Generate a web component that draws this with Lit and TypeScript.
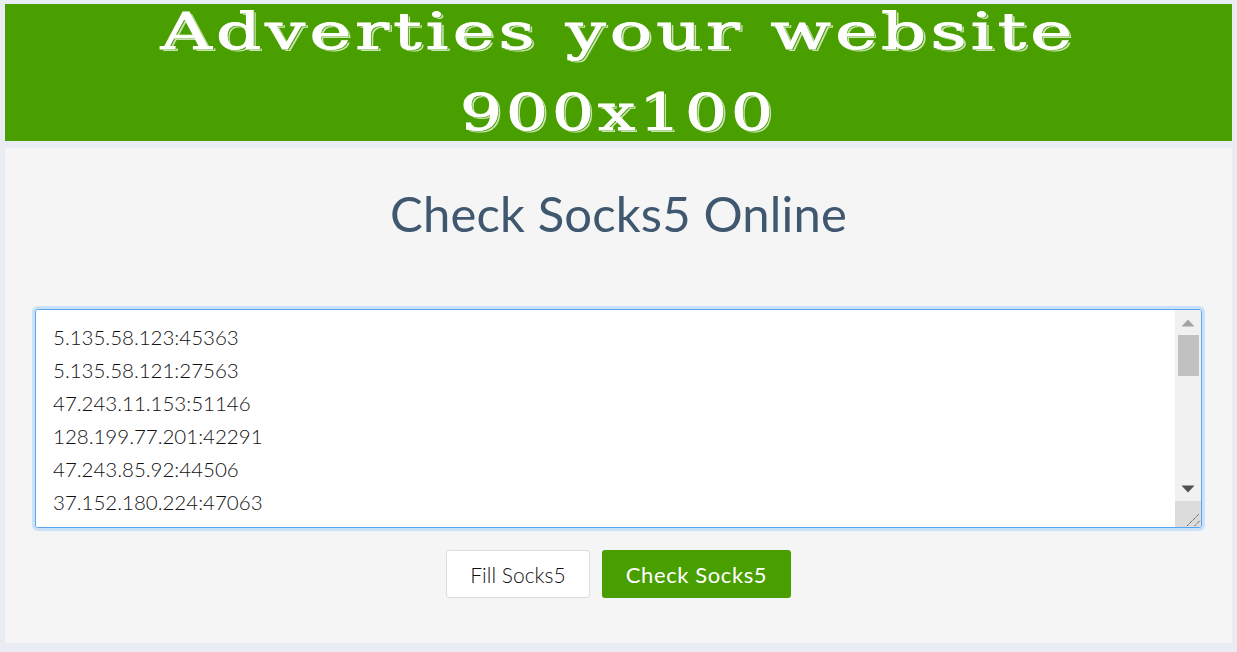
import { LitElement, html, css } from "lit";
import { customElement } from "lit/decorators.js";

const PROXIES = [
  "5.135.58.123:45363",
  "5.135.58.121:27563",
  "47.243.11.153:51146",
  "128.199.77.201:42291",
  "47.243.85.92:44506",
  "37.152.180.224:47063",
].join("\n");

@customElement("app-root")
export class AppRoot extends LitElement {
  static styles = css`
    :host {
      display: block;
      height: 652px;
      overflow: hidden;
      background: #e9edf3;
      font-family: "Lato", "Liberation Sans", sans-serif;
      font-weight: 300;
      color: #111;
    }
    .page {
      display: flex;
      flex-direction: column;
      gap: 7px;
      padding: 4px 5px 9px;
      height: 652px;
      box-sizing: border-box;
    }
    .banner {
      height: 137px;
      flex: none;
      display: flex;
      flex-direction: column;
      gap: 25px;
      background: #4a9f00;
      text-align: center;
      color: #fff;
      font-family: "DejaVu Serif", "Liberation Serif", serif;
      font-weight: 400;
    }
    .banner-line {
      height: 56px;
      line-height: 56px;
      font-size: 50px;
      letter-spacing: 3px;
      white-space: nowrap;
      -webkit-text-stroke: 1px #fff;
      text-shadow: 1px 1px 0 #4a9f00, 2px 2px 0 #c9e4b4;
    }
    .first {
      transform: scaleX(1.41);
    }
    .second {
      transform: scaleX(1.32);
    }
    .panel {
      flex: 1;
      background: #f5f5f5;
      display: flex;
      flex-direction: column;
      align-items: stretch;
      padding: 0 30px;
    }
    h1 {
      margin: 38px 0 69px;
      height: 54px;
      line-height: 54px;
      text-align: center;
      font-size: 49px;
      letter-spacing: 0.15px;
      font-weight: 400;
      color: #3f5870;
    }
    .box {
      display: flex;
      height: 217px;
      margin: 0 0 22px;
      border: 1px solid #5aa6ee;
      border-radius: 3px;
      background: #fff;
      box-shadow: 0 0 0 3px #c9e2f8;
      overflow: hidden;
    }
    textarea {
      flex: 1;
      border: 0;
      outline: 0;
      resize: none;
      overflow: hidden;
      margin: 0;
      padding: 11px 17px 9px;
      background: #fff;
      color: #111;
      font: inherit;
      font-size: 20.5px;
      line-height: 33px;
    }
    .scrollbar {
      flex: none;
      width: 26px;
      display: flex;
      flex-direction: column;
      align-items: center;
      background: #f1f1f1;
    }
    .arrow {
      flex: none;
      height: 25px;
      width: 26px;
      display: flex;
      align-items: center;
      justify-content: center;
    }
    .thumb {
      flex: none;
      width: 21px;
      height: 41px;
      background: #c1c1c1;
    }
    .track {
      flex: 1;
    }
    .corner {
      flex: none;
      width: 26px;
      height: 26px;
      background: #dcdcdc;
      display: block;
    }
    .actions {
      display: flex;
      justify-content: center;
      gap: 12px;
    }
    button {
      height: 48px;
      margin: 0;
      border-radius: 3px;
      font: inherit;
      font-size: 21px;
      box-sizing: border-box;
      padding: 0;
    }
    .fill {
      width: 144px;
      background: #fff;
      color: #111;
      border: 1px solid #dddddd;
    }
    .check {
      width: 189px;
      background: #4a9f00;
      color: #fff;
      border: 0;
      font-weight: 400;
      font-size: 22px;
      letter-spacing: 0.6px;
    }
  `;

  render() {
    return html`
      <div class="page">
        <div class="banner">
          <div class="banner-line first">Adverties your website</div>
          <div class="banner-line second">900x100</div>
        </div>
        <div class="panel">
          <h1>Check Socks5 Online</h1>
          <div class="box">
            <textarea spellcheck="false" .value=${PROXIES}></textarea>
            <div class="scrollbar">
              <div class="arrow">
                <svg width="14" height="8" viewBox="0 0 14 8"><path d="M7 0.5 L13.5 7.5 H0.5 Z" fill="#a3a3a3"/></svg>
              </div>
              <div class="thumb"></div>
              <div class="track"></div>
              <div class="arrow">
                <svg width="14" height="8" viewBox="0 0 14 8"><path d="M0.5 0.5 H13.5 L7 7.5 Z" fill="#505050"/></svg>
              </div>
              <svg class="corner" viewBox="0 0 26 26">
                <path d="M12 25 L24 13 M19.5 25 L25 19.5" stroke="#555" stroke-width="1" stroke-dasharray="1.4 0.6" fill="none"/>
              </svg>
            </div>
          </div>
          <div class="actions">
            <button class="fill">Fill Socks5</button>
            <button class="check">Check Socks5</button>
          </div>
        </div>
      </div>
    `;
  }
}
